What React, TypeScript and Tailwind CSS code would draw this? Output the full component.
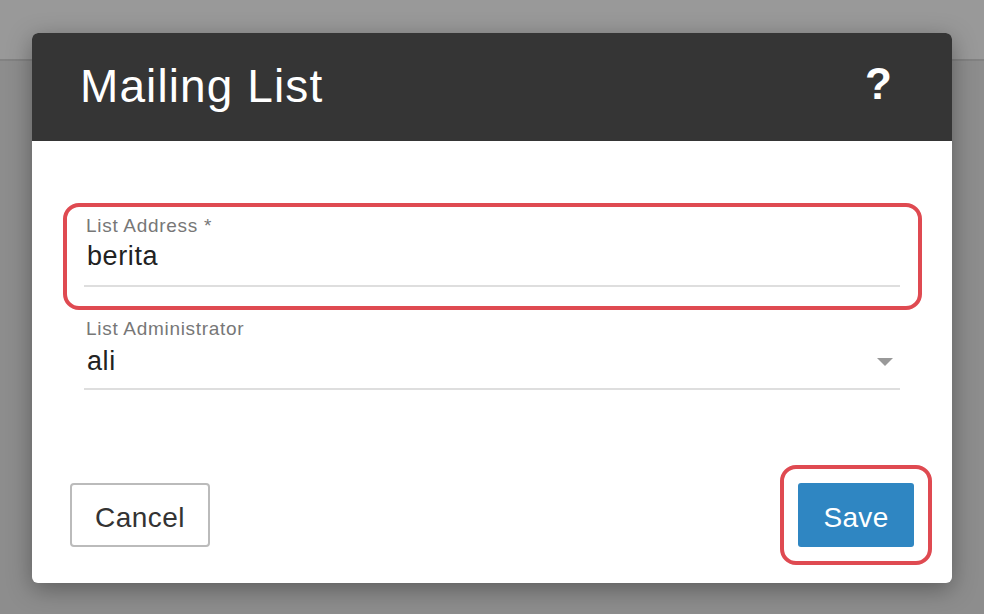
import React from "react";

const font = { fontFamily: '"Liberation Sans", Arial, Helvetica, sans-serif' };

function Field({
  label,
  value,
  select,
}: {
  label: string;
  value: string;
  select?: boolean;
}) {
  return (
    <div
      className={
        "relative border-b-2 border-[#dedede] " + (select ? "pb-[11px]" : "pb-[13px]")
      }
    >
      <div className="pl-[2px] text-[19px] leading-[22px] tracking-[0.7px] text-[#777777]">
        {label}
      </div>
      <div
        className={
          "flex items-center justify-between pl-[3px] pr-[7px] " +
          (select ? "mt-[5px]" : "mt-[3px]")
        }
      >
        <span className="text-[27px] leading-[32px] tracking-[0.6px] text-[#222222]">
          {value}
        </span>
        {select && (
          <svg width="16" height="8" viewBox="0 0 16 8" className="mt-[1px]">
            <path d="M0 0 L16 0 L8 8 Z" fill="#999999" />
          </svg>
        )}
      </div>
    </div>
  );
}

export default function App() {
  return (
    <div
      className="relative h-[614px] w-[984px] overflow-hidden bg-[#8d8d8d]"
      style={font}
    >
      <div className="h-[61px] border-b-2 border-[#828282] bg-[#999999]" />

      <div className="absolute left-[32px] top-[33px] flex h-[550px] w-[920px] flex-col rounded-[6px] bg-white shadow-[0_6px_24px_rgba(0,0,0,0.35)]">
        <div className="flex h-[108px] items-start justify-between rounded-t-[6px] bg-[#353535] pl-[48px] pr-[60px] pt-[26px]">
          <h1 className="text-[46px] font-normal leading-[54px] tracking-[1.1px] text-white">
            Mailing List
          </h1>
          <span className="-mt-[1px] text-[44px] font-bold leading-[52px] text-white">?</span>
        </div>

        <div className="flex flex-1 flex-col px-[52px] pt-[74px]">
          <div className="relative">
            <Field label="List Address *" value="berita" />
            <div className="pointer-events-none absolute -left-[21px] -right-[22px] -top-[12px] -bottom-[23px] rounded-[16px] border-[4px] border-[#df4a51]" />
          </div>
          <div className="mt-[31px]">
            <Field label="List Administrator" value="ali" select />
          </div>
        </div>

        <div className="flex items-center justify-between px-[38px] pb-[36px]">
          <button className="flex h-[64px] w-[140px] items-center justify-center rounded-[4px] border-2 border-[#bbbbbb] bg-white pt-[5px] text-[28px] leading-[32px] tracking-[0.5px] text-[#333333]">
            Cancel
          </button>
          <div className="relative">
            <button className="flex h-[64px] w-[116px] items-center justify-center rounded-[3px] bg-[#2f86c2] pt-[5px] text-[28px] leading-[32px] tracking-[0.3px] text-white">
              Save
            </button>
            <div className="pointer-events-none absolute -left-[18px] -right-[18px] -top-[18px] -bottom-[18px] rounded-[16px] border-[4px] border-[#df4a51]" />
          </div>
        </div>
      </div>
    </div>
  );
}
